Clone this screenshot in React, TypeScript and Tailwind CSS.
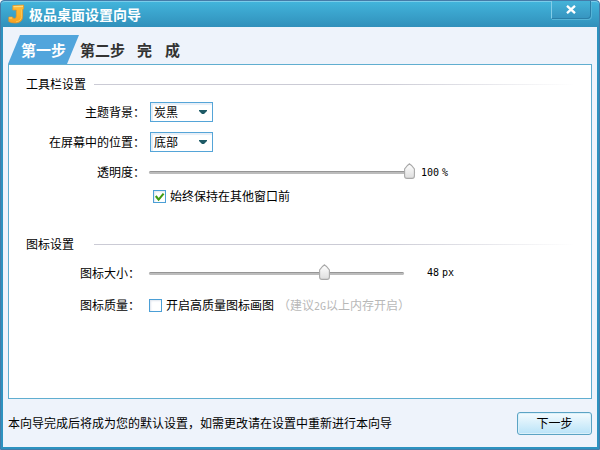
import { useState, type ReactNode } from "react";

function Logo() {
  return (
    <svg width="17" height="20" viewBox="0 0 17 20" aria-hidden="true">
      <defs>
        <linearGradient id="gold" x1="0" y1="0" x2="0" y2="1">
          <stop offset="0" stopColor="#fdbb3a" />
          <stop offset="0.55" stopColor="#fdb22c" />
          <stop offset="1" stopColor="#f8a022" />
        </linearGradient>
      </defs>
      <path d="M4.8 1.6 15.6 1V5L14.6 5.6V12.5Q14.6 18.8 7.5 19 3 19 .8 17.5V13H4.5Q5 14.8 6.8 14.6 8.3 14.4 8.3 12V6H4.8Z" fill="url(#gold)" stroke="#ec9624" strokeWidth=".7" />
      <path d="M5.5 2.1 15 1.7V2.9L5.5 3.3ZM1.2 13.4H4V14.4H1.2Z" fill="#ffdc7c" />
      <path d="M13.6 5.5V12.5Q13.4 17 8 17.8" fill="none" stroke="#ffcb58" strokeWidth=".9" />
    </svg>
  );
}

function SectionTitle({ children }: { children: ReactNode }) {
  return (
    <div className="flex h-5 items-center pr-4 pl-[17px]">
      <h2 className="w-17 shrink-0 whitespace-nowrap">{children}</h2>
      <div className="h-px flex-1 bg-linear-to-r from-[#cbcbd5] from-60% to-white" />
    </div>
  );
}

function Dropdown({ id, options }: { id: string; options: string[] }) {
  return (
    <div className="relative ml-[5px]">
      <select
        id={id}
        className="block h-5 w-[63px] appearance-none border border-[#55a5d8] bg-white pr-5 pl-[3px] leading-[18px] shadow-[inset_2px_2px_1px_#e6eef7] outline-none"
      >
        {options.map((o) => (
          <option key={o}>{o}</option>
        ))}
      </select>
      <svg className="pointer-events-none absolute top-2 right-[6px]" width="8" height="4" viewBox="0 0 8 4" aria-hidden="true">
        <path d="M0 0H8V1L5 4H3L0 1Z" fill="#1d5a66" />
      </svg>
    </div>
  );
}

function Slider({ id, max, value, onChange, className }: { id: string; max: number; value: number; onChange: (v: number) => void; className: string }) {
  const ratio = value / max;
  return (
    <div className={`relative flex h-4 items-center ${className}`}>
      <div className="h-[3px] w-full rounded-xs border-t border-[#969696] bg-[#bcbcbc]" />
      <svg
        className="absolute -top-px"
        style={{ left: `calc((100% - 11px) * ${ratio})` }}
        width="11"
        height="16"
        viewBox="0 0 11 16"
        aria-hidden="true"
      >
        <defs>
          <linearGradient id={`${id}-fill`} x1="0" y1="0" x2="0" y2="1">
            <stop offset="0" stopColor="#ffffff" />
            <stop offset="1" stopColor="#dedede" />
          </linearGradient>
        </defs>
        <path d="M5.5.8 7.5 2.5 10.4 6V13Q10.4 15.4 8 15.4H3Q.6 15.4 .6 13V6L3.5 2.5Z" fill={`url(#${id}-fill)`} stroke="#a9a9a9" strokeWidth="1.1" />
      </svg>
      <input
        id={id}
        type="range"
        min={0}
        max={max}
        value={value}
        onChange={(e) => onChange(Number(e.target.value))}
        className="absolute inset-0 m-0 h-4 w-full opacity-0"
      />
    </div>
  );
}

function CheckBox({ label, checked, onChange }: { label: string; checked: boolean; onChange: (v: boolean) => void }) {
  return (
    <label className="flex items-center gap-1 whitespace-nowrap">
      <span className="relative block size-[13px] border border-[#4b9fd6] bg-white shadow-[inset_1px_1px_2px_#dfe5ee]">
        <input
          type="checkbox"
          checked={checked}
          onChange={(e) => onChange(e.target.checked)}
          className="block size-[11px] appearance-none bg-transparent"
        />
        {checked && (
          <svg className="pointer-events-none absolute inset-0" width="11" height="11" viewBox="1 1 11 11" aria-hidden="true">
            <path d="M2.8 6 5.6 9.6 10.6 3.6" fill="none" stroke="#3f9a12" strokeWidth="2.1" />
          </svg>
        )}
      </span>
      {label}
    </label>
  );
}

function Reading({ htmlFor, value, unit, className }: { htmlFor: string; value: number; unit: string; className: string }) {
  return (
    <output htmlFor={htmlFor} className={`flex gap-[3px] font-['DejaVu_Sans_Mono',monospace] text-[10px] ${className}`}>
      <span>{value}</span>
      <span>{unit}</span>
    </output>
  );
}

export default function App() {
  const [opacity, setOpacity] = useState(100);
  const [size, setSize] = useState(48);
  const [onTop, setOnTop] = useState(true);
  const [highQuality, setHighQuality] = useState(false);

  return (
    <div className="bg-white font-['Noto_Sans_CJK_SC',sans-serif] text-xs text-black">
      <main className="flex min-h-screen flex-col rounded-t-sm border border-[#457ba8] bg-[#2d92c0]">
        <header className="flex h-[26px] items-start rounded-t-sm border-t border-[#7accea] bg-linear-to-b from-[#42b4db] to-[#3190bb] pr-2 pl-[7px]">
          <div className="pt-[2px]">
            <Logo />
          </div>
          <h1 className="ml-1 text-sm leading-6 font-bold whitespace-nowrap text-white">极品桌面设置向导</h1>
          <button
            type="button"
            aria-label="关闭"
            className="-mt-px ml-auto flex h-[18px] w-10 items-center justify-center rounded-br border-r border-b border-l border-r-[#2b7fa8] border-b-[#2b7fa8] border-l-[#83cde8] bg-linear-to-b from-[#45b3d9] to-[#3795c0] shadow-[1px_1px_0_#55b3d6]"
          >
            <svg width="10" height="9" viewBox="0 0 10 9" aria-hidden="true">
              <path d="M1 .8 9 8.2M9 .8 1 8.2" stroke="#fff" strokeWidth="2.3" />
            </svg>
          </button>
        </header>

        <div className="mx-[2px] mb-[2px] flex flex-1 flex-col bg-[#eef3fb] pr-[5px] pl-[5px]">
          <nav className="flex pt-2 text-[15px] leading-[29px] font-bold whitespace-nowrap text-[#333]">
            <button type="button" className="w-[71px] bg-[#51a5dc] text-center text-white [clip-path:polygon(12px_0,100%_0,59px_100%,0_100%)]">
              第一步
            </button>
            <button type="button" className="ml-px">第二步</button>
            <button type="button" className="ml-3 flex gap-[13px]">
              <span>完</span>
              <span>成</span>
            </button>
          </nav>

          <section className="flex-1 border border-[#60aed0] bg-white pt-[9px]">
            <SectionTitle>工具栏设置</SectionTitle>
            <div className="mt-[2px] flex h-[31px] items-center">
              <label htmlFor="theme" className="w-34 text-right">主题背景：</label>
              <Dropdown id="theme" options={["炭黑"]} />
            </div>
            <div className="flex h-[30px] items-center">
              <label htmlFor="position" className="w-34 text-right">在屏幕中的位置：</label>
              <Dropdown id="position" options={["底部"]} />
            </div>
            <div className="flex h-[30px] items-center">
              <label htmlFor="opacity" className="w-34 text-right">透明度：</label>
              <Slider id="opacity" max={100} value={opacity} onChange={setOpacity} className="ml-1 w-[266px]" />
              <Reading htmlFor="opacity" value={opacity} unit="%" className="ml-[6px] pt-[2px]" />
            </div>
            <div className="flex h-[18px] items-center pl-36">
              <CheckBox label="始终保持在其他窗口前" checked={onTop} onChange={setOnTop} />
            </div>

            <div className="mt-[29px]">
              <SectionTitle>图标设置</SectionTitle>
            </div>
            <div className="mt-1 flex h-[30px] items-center">
              <label htmlFor="size" className="w-[131px] text-right">图标大小：</label>
              <Slider id="size" max={69} value={size} onChange={setSize} className="ml-[9px] w-[255px]" />
              <Reading htmlFor="size" value={size} unit="px" className="ml-[23px]" />
            </div>
            <div className="mt-[2px] flex h-[30px] items-center whitespace-nowrap">
              <span className="mr-[9px] w-[131px] text-right">图标质量：</span>
              <CheckBox label="开启高质量图标画图" checked={highQuality} onChange={setHighQuality} />
              <span className="ml-1 text-[#b8b8b8]">
                （建议<span className="font-['DejaVu_Sans_Mono',monospace] text-[10px]">2G</span>以上内存开启）
              </span>
            </div>
          </section>

          <footer className="flex h-12 items-center justify-between">
            <p>本向导完成后将成为您的默认设置，如需更改请在设置中重新进行本向导</p>
            <button
              type="button"
              className="h-[23px] w-[75px] rounded-[3px] border border-[#5ba3c4] bg-linear-to-b from-[#f4fbfe] to-[#b9e3f8] shadow-[inset_0_0_0_1px_#d9f0fa]"
            >
              下一步
            </button>
          </footer>
        </div>
      </main>
    </div>
  );
}
